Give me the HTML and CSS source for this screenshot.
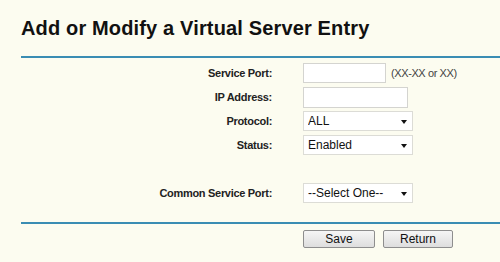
FILE: index.html
```html
<!DOCTYPE html>
<html lang="en">
<head>
    <meta charset="UTF-8">
    <meta name="viewport" content="width=device-width, initial-scale=1.0">
    <title>Virtual Servers</title>
    <link rel="stylesheet" href="styles.css">
</head>
<body>
    <div class="page">
        <h1 class="title">Add or Modify a Virtual Server Entry</h1>
        <div class="rule"></div>

        <form class="entry-form">
            <div class="row">
                <label class="label">Service Port:</label>
                <div class="field">
                    <input type="text" class="text-box port-box">
                    <span class="hint">(XX-XX or XX)</span>
                </div>
            </div>
            <div class="row">
                <label class="label">IP Address:</label>
                <div class="field">
                    <input type="text" class="text-box ip-box">
                </div>
            </div>
            <div class="row">
                <label class="label">Protocol:</label>
                <div class="field">
                    <span class="select-wrap">
                        <select class="drop">
                            <option>ALL</option>
                            <option>TCP</option>
                            <option>UDP</option>
                        </select>
                    </span>
                </div>
            </div>
            <div class="row">
                <label class="label">Status:</label>
                <div class="field">
                    <span class="select-wrap">
                        <select class="drop">
                            <option>Enabled</option>
                            <option>Disabled</option>
                        </select>
                    </span>
                </div>
            </div>
            <div class="row empty-row"></div>
            <div class="row">
                <label class="label">Common Service Port:</label>
                <div class="field">
                    <span class="select-wrap">
                        <select class="drop">
                            <option>--Select One--</option>
                            <option>DNS</option>
                            <option>FTP</option>
                            <option>HTTP</option>
                        </select>
                    </span>
                </div>
            </div>
        </form>

        <div class="rule bottom-rule"></div>

        <div class="button-row">
            <button type="button" class="btn save-btn">Save</button>
            <button type="button" class="btn return-btn">Return</button>
        </div>
    </div>
</body>
</html>
```

FILE: styles.css
```css
/* halaman dasar */
body {
    margin: 0;
    background-color: #fcfcf0;
    font-family: "Liberation Sans", Arial, sans-serif;
    color: #111;
}

.page {
    padding-left: 21px;
}

.title {
    margin: 0;
    padding-top: 16px;
    font-size: 20px;
    line-height: 24px;
    font-weight: bold;
    letter-spacing: 0.15px;
    color: #111;
}

/* garis biru */
.rule {
    height: 2px;
    margin-top: 16px;
    background-color: #3a8db3;
}

.bottom-rule {
    margin-top: 17px;
}

.entry-form {
    padding-top: 3px;
}

.row {
    display: grid;
    grid-template-columns: 251px auto;
    column-gap: 31px;
    align-items: center;
    height: 24px;
}

.label {
    text-align: right;
    font-size: 11px;
    font-weight: bold;
    letter-spacing: -0.3px;
    color: #222;
}

.field {
    display: flex;
    align-items: center;
}

.text-box {
    box-sizing: border-box;
    height: 20px;
    margin: 0;
    border: 1px solid #d4d4d0;
    background-color: #fff;
    font-size: 12px;
}

.port-box {
    width: 83px;
}

.ip-box {
    width: 105px;
    height: 21px;
}

.hint {
    margin-left: 5px;
    font-size: 11px;
    letter-spacing: -0.4px;
    color: #444;
}

/* kotak pilihan */
.select-wrap {
    position: relative;
    display: inline-block;
}

.select-wrap::after {
    content: "";
    position: absolute;
    right: 6px;
    top: 9px;
    border-left: 3px solid transparent;
    border-right: 3px solid transparent;
    border-top: 4px solid #111;
    pointer-events: none;
}

.drop {
    appearance: none;
    -webkit-appearance: none;
    box-sizing: border-box;
    width: 110px;
    height: 20px;
    margin: 0;
    padding: 0 0 0 4px;
    border: 1px solid #dcdcd6;
    border-radius: 0;
    background-color: #fff;
    font-family: "Liberation Sans", Arial, sans-serif;
    font-size: 12px;
    color: #111;
}

/* tombol */
.button-row {
    display: flex;
    gap: 8px;
    padding-top: 6px;
    padding-left: 282px;
}

.btn {
    box-sizing: border-box;
    height: 18px;
    padding: 0;
    border: 1px solid #8e8e8e;
    border-radius: 2px;
    background: linear-gradient(#f6f6f6, #dedede);
    font-family: "Liberation Sans", Arial, sans-serif;
    font-size: 12px;
    color: #111;
    cursor: pointer;
}

.save-btn {
    width: 72px;
}

.return-btn {
    width: 70px;
}
```
